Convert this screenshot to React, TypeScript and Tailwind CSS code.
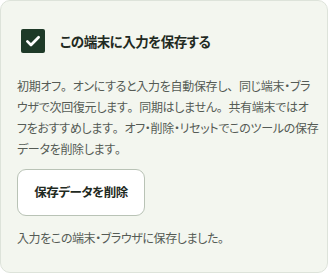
const P = ({ c }: { c: string }) => <span className="[font-feature-settings:normal]">{c}</span>;

export default function App() {
  return (
    <div className="h-[273px] w-[328px] font-['Noto_Sans_CJK_JP',sans-serif] [font-feature-settings:'palt']">
      <div className="flex h-full flex-col rounded-[10px] border border-[#dde3da] bg-[#f3f6ef] px-4 pt-[28px]">
        <label className="flex items-center gap-[15px] pl-1">
          <span className="flex h-6 w-6 items-center justify-center rounded-[2px] bg-[#1e3a28]">
            <svg viewBox="0 0 24 24" className="h-[18px] w-[18px]" fill="none" stroke="white" strokeWidth={3.6} strokeLinecap="round" strokeLinejoin="round">
              <path d="M4.5 12.5l4.8 4.8L19.5 7" />
            </svg>
          </span>
          <span className="text-[13.5px] font-bold tracking-[-0.5px] text-[#1f2a22]">この端末に入力を保存する</span>
        </label>
        <p className="mt-[22px] whitespace-nowrap text-[12px] leading-[21px] tracking-[-0.3px] text-[#555b55]">
          <span className="block">
            初期オフ<P c="。" />オンにすると入力を自動保存し<P c="、" />同じ端末・ブラ
          </span>
          <span className="block">
            ウザで次回復元します<P c="。" />同期はしません<P c="。" />共有端末ではオ
          </span>
          <span className="block">
            フをおすすめします<P c="。" />オフ・削除・リセットでこのツールの保存
          </span>
          <span className="block">
            データを削除します<P c="。" />
          </span>
        </p>
        <button className="mt-[10px] h-[47px] w-[128px] rounded-[9px] border border-[#b9c3b6] bg-white text-[12.5px] font-bold tracking-[-0.5px] text-[#1f2a22]">
          保存データを削除
        </button>
        <p className="mt-[11px] text-[12px] leading-[21px] tracking-[-0.4px] text-[#555b55]">
          入力をこの端末・ブラウザに保存しました<P c="。" />
        </p>
      </div>
    </div>
  );
}
